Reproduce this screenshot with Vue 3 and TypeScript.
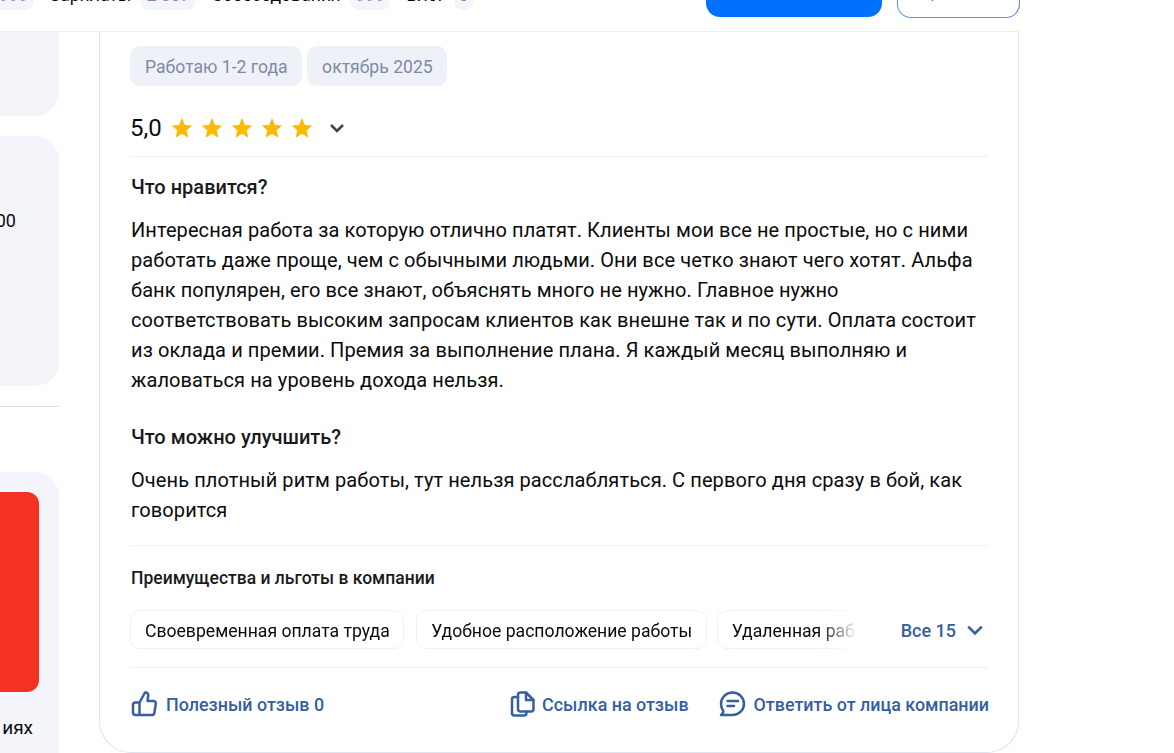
<script setup lang="ts">
const nav = [
  { label: "Зарплаты", count: "2 807" },
  { label: "Собеседования", count: "999" },
  { label: "Блог", count: "5" },
];
const perks = [
  "Своевременная оплата труда",
  "Удобное расположение работы",
  "Удаленная работа",
];
const stars = [1, 2, 3, 4, 5];
</script>

<template>
  <div class="page">
    <header class="topbar">
      <nav class="nav">
        <span class="count first">999</span>
        <template v-for="item in nav" :key="item.label">
          <span class="navLabel">{{ item.label }}</span>
          <span class="count">{{ item.count }}</span>
        </template>
      </nav>
      <div class="actions">
        <div class="btnPrimary"></div>
        <div class="btnOutline"><span>Сравнить</span></div>
      </div>
    </header>

    <div class="content">
      <aside class="side">
        <div class="sideTop"></div>
        <div class="sideMid"><span class="sideNum">000</span></div>
        <div class="sideLine"></div>
        <div class="sideBanner">
          <div class="redBox"></div>
          <div class="sideCaption">условиях</div>
        </div>
      </aside>

      <main class="card">
        <div class="tags">
          <span class="tag">Работаю 1-2 года</span>
          <span class="tag">октябрь 2025</span>
        </div>

        <div class="rating">
          <span class="score">5,0</span>
          <div class="stars">
            <svg v-for="s in stars" :key="s" class="star" viewBox="0 0 24 24">
              <path d="M12 1.2l3.2 7.4 8 .7-6.1 5.3 1.9 7.9L12 18.3l-7 4.2 1.9-7.9L.8 9.3l8-.7z" fill="#ffba00" />
            </svg>
          </div>
          <svg class="ratingChevron" viewBox="0 0 16 16">
            <path d="M2 5l6 6 6-6" fill="none" stroke="#444" stroke-width="2.6" />
          </svg>
        </div>

        <h3 class="heading">Что нравится?</h3>
        <p class="text">
          Интересная работа за которую отлично платят. Клиенты мои все не простые, но с ними работать даже проще, чем с обычными людьми. Они все четко знают чего хотят. Альфа банк популярен, его все знают, объяснять много не нужно. Главное нужно соответствовать высоким запросам клиентов как внешне так и по сути. Оплата состоит из оклада и премии. Премия за выполнение плана. Я каждый месяц выполняю и жаловаться на уровень дохода нельзя.
        </p>

        <h3 class="heading">Что можно улучшить?</h3>
        <p class="text">
          Очень плотный ритм работы, тут нельзя расслабляться. С первого дня сразу в бой, как говорится
        </p>

        <section class="perks">
          <h4 class="perksTitle">Преимущества и льготы в компании</h4>
          <div class="perksRow">
            <div class="perksList">
              <span v-for="p in perks" :key="p" class="perk">{{ p }}</span>
            </div>
            <div class="perksAll">
              <span>Все 15</span>
              <svg class="allChevron" viewBox="0 0 16 16">
                <path d="M2 5l6 6 6-6" fill="none" stroke="#365f9f" stroke-width="2.4" />
              </svg>
            </div>
          </div>
        </section>

        <footer class="footer">
          <a class="link">
            <svg class="icon" viewBox="0 0 28 28" fill="none" stroke="#365f9f" stroke-width="2.5" stroke-linejoin="round" stroke-linecap="round">
              <path d="M9.5 12.500L15 2.500c2.400-.3 3.600 1.300 3.200 3.500l-.7 5h6c1.500 0 2.500 1.200 2.300 2.700l-1.400 9c-.2 1.300-1.200 2.300-2.500 2.300H5.500c-1.500 0-2.500-1-2.500-2.500v-7.500c0-1.500 1-2.500 2.500-2.500h4v12.500" />
            </svg>
            <span>Полезный отзыв 0</span>
          </a>
          <div class="footerRight">
            <a class="link copy">
              <svg class="icon" viewBox="0 0 28 28" fill="none" stroke="#365f9f" stroke-width="2.5" stroke-linejoin="round" stroke-linecap="round">
                <path d="M10 19V5c0-1.500 1-2.500 2.500-2.500H18l7.500 7.500v9c0 1.500-1 2.500-2.500 2.500H12.500c-1.500 0-2.500-1-2.500-2.500z" />
                <path d="M18 2.800V10h7.200" />
                <path d="M10 7H6.500C5 7 4 8 4 9.500V23c0 1.500 1 2.500 2.500 2.500H16c1.500 0 2.500-1 2.500-2.500v-1.500" />
              </svg>
              <span>Ссылка на отзыв</span>
            </a>
            <a class="link">
              <svg class="icon" viewBox="0 0 28 28" fill="none" stroke="#365f9f" stroke-width="2.5" stroke-linejoin="round" stroke-linecap="round">
                <path d="M14.500 2.500c6.500 0 11.500 5 11.500 11.250S21 25 14.500 25H3c1.500-1 2.500-2.500 2.200-4.200C3.800 18.800 3 16.400 3 13.750 3 7.500 8 2.500 14.500 2.500z" />
                <path d="M9.500 11h10.500M9.500 16h6.500" />
              </svg>
              <span>Ответить от лица компании</span>
            </a>
          </div>
        </footer>
      </main>
    </div>
  </div>
</template>

<style scoped>
.page {
  width: 1174px;
  height: 753px;
  overflow: hidden;
  background: #fff;
  font-family: Roboto, "Liberation Sans", sans-serif;
  color: #0b0b0b;
}
.topbar {
  display: flex;
  justify-content: space-between;
  align-items: flex-start;
  height: 32px;
  width: 1019px;
  box-sizing: border-box;
  border-bottom: 1px solid #ebedf5;
}
.nav {
  display: flex;
  align-items: center;
  height: 20px;
  margin-top: -15px;
  font-size: 17.6px;
  white-space: nowrap;
}
.navLabel {
  margin-right: 10px;
}
.count {
  padding: 0 5px;
  height: 30px;
  line-height: 30px;
  margin-right: 16px;
  border-radius: 8px;
  background: #f3f5fb;
  color: #7e8ba0;
}
.count:last-child {
  padding: 0 4.5px;
  margin-left: -1px;
}
.first {
  margin-left: -6px;
}
.actions {
  display: flex;
  gap: 15px;
  margin-right: -1px;
}
.btnPrimary {
  width: 176px;
  height: 17px;
  background: #0070ff;
  border-radius: 0 0 14px 14px;
}
.btnOutline {
  display: flex;
  align-items: flex-end;
  justify-content: center;
  width: 123px;
  height: 18px;
  box-sizing: border-box;
  border: 1px solid #5e8ee8;
  border-top: 0;
  border-radius: 0 0 14px 14px;
  color: #5e8ee8;
  font-size: 17.6px;
  line-height: 20px;
}
.btnOutline span {
  margin-bottom: 16px;
}
.content {
  display: flex;
  gap: 40px;
}
.side {
  width: 59px;
  flex-shrink: 0;
}
.sideTop {
  height: 84px;
  background: #f4f5fb;
  border-radius: 0 0 24px 0;
}
.sideMid {
  height: 250px;
  margin-top: 20px;
  background: #f4f5fb;
  border-radius: 0 24px 24px 0;
  overflow: hidden;
  display: flex;
  justify-content: flex-end;
}
.sideNum {
  margin-top: 73px;
  margin-right: 43px;
  font-size: 18px;
  line-height: 24px;
  white-space: nowrap;
}
.sideLine {
  height: 1px;
  margin-top: 20px;
  background: #dde3ee;
}
.sideBanner {
  height: 300px;
  margin-top: 65px;
  padding-top: 20px;
  box-sizing: border-box;
  background: #f4f5fb;
  border-radius: 0 24px 0 0;
}
.redBox {
  width: 39px;
  height: 200px;
  background: #f33223;
  border-radius: 0 12px 12px 0;
}
.sideCaption {
  margin: 25px 0 0 2px;
  font-size: 19px;
  line-height: 22px;
  direction: rtl;
  width: 31px;
  overflow: hidden;
  white-space: nowrap;
}
.card {
  width: 920px;
  height: 721px;
  box-sizing: border-box;
  padding: 14px 30px 0;
  background: #fff;
  border: 1px solid #dde3ef;
  border-top: 0;
  border-radius: 0 0 32px 32px;
}
.tags {
  display: flex;
  gap: 5px;
}
.tag {
  padding: 0 14.5px 0 15px;
  height: 40px;
  line-height: 42px;
  border-radius: 10px;
  background: #eef1f8;
  color: #7e8ba0;
  font-size: 17.6px;
}
.rating {
  display: flex;
  align-items: center;
  box-sizing: border-box;
  height: 71px;
  padding-top: 14px;
  border-bottom: 1px solid #f0f2f7;
}
.score {
  width: 41px;
  font-size: 24px;
  line-height: 28px;
}
.stars {
  display: flex;
  gap: 8px;
}
.star {
  width: 22px;
  height: 22px;
  display: block;
}
.ratingChevron {
  width: 16px;
  height: 16px;
  margin-left: 16px;
}
.heading {
  margin: 20px 0 0;
  padding-left: 1px;
  font-size: 20px;
  line-height: 20px;
  font-weight: 500;
  color: #1a1a1a;
}
.text {
  margin: 18px 0 0;
  padding-left: 1px;
  font-size: 20px;
  letter-spacing: 0.09px;
  line-height: 30px;
  color: #0b0b0b;
}
.text + .heading {
  margin-top: 32px;
}
.perks {
  margin-top: 20px;
  border-top: 1px solid #f0f2f7;
  border-bottom: 1px solid #f0f2f7;
  padding-bottom: 18px;
}
.perksTitle {
  margin: 23px 0 0;
  padding-left: 1px;
  font-size: 17.5px;
  line-height: 18px;
  font-weight: 500;
  color: #1a1a1a;
}
.perksRow {
  display: flex;
  margin-top: 23px;
  justify-content: space-between;
}
.perksList {
  display: flex;
  gap: 12px;
  width: 726px;
  overflow: hidden;
  -webkit-mask-image: linear-gradient(to right, #000 690px, transparent 728px);
  mask-image: linear-gradient(to right, #000 690px, transparent 728px);
}
.perk {
  flex-shrink: 0;
  box-sizing: border-box;
  height: 39px;
  line-height: 40px;
  padding: 0 13.5px 0 14px;
  border: 1px solid #eef1f8;
  border-radius: 10px;
  font-size: 17.6px;
  white-space: nowrap;
}
.perk:last-child {
  margin-left: -2px;
}
.perksAll {
  display: flex;
  align-items: center;
  gap: 10px;
  padding: 1px 5px 0 0;
  margin-right: -1px;
  color: #365f9f;
  font-size: 18px;
  font-weight: 500;
}
.allChevron {
  width: 18px;
  height: 18px;
}
.footer {
  display: flex;
  justify-content: space-between;
  align-items: center;
  height: 72px;
}
.footerRight {
  display: flex;
  gap: 29px;
  margin-right: -1px;
}
.link {
  display: flex;
  align-items: center;
  gap: 8px;
  color: #365f9f;
  font-size: 17.9px;
  font-weight: 500;
}
.copy {
  gap: 6px;
}
.icon {
  width: 28px;
  height: 28px;
  display: block;
}
</style>

<style>
html,
body {
  margin: 0;
  overflow: hidden;
}
</style>
